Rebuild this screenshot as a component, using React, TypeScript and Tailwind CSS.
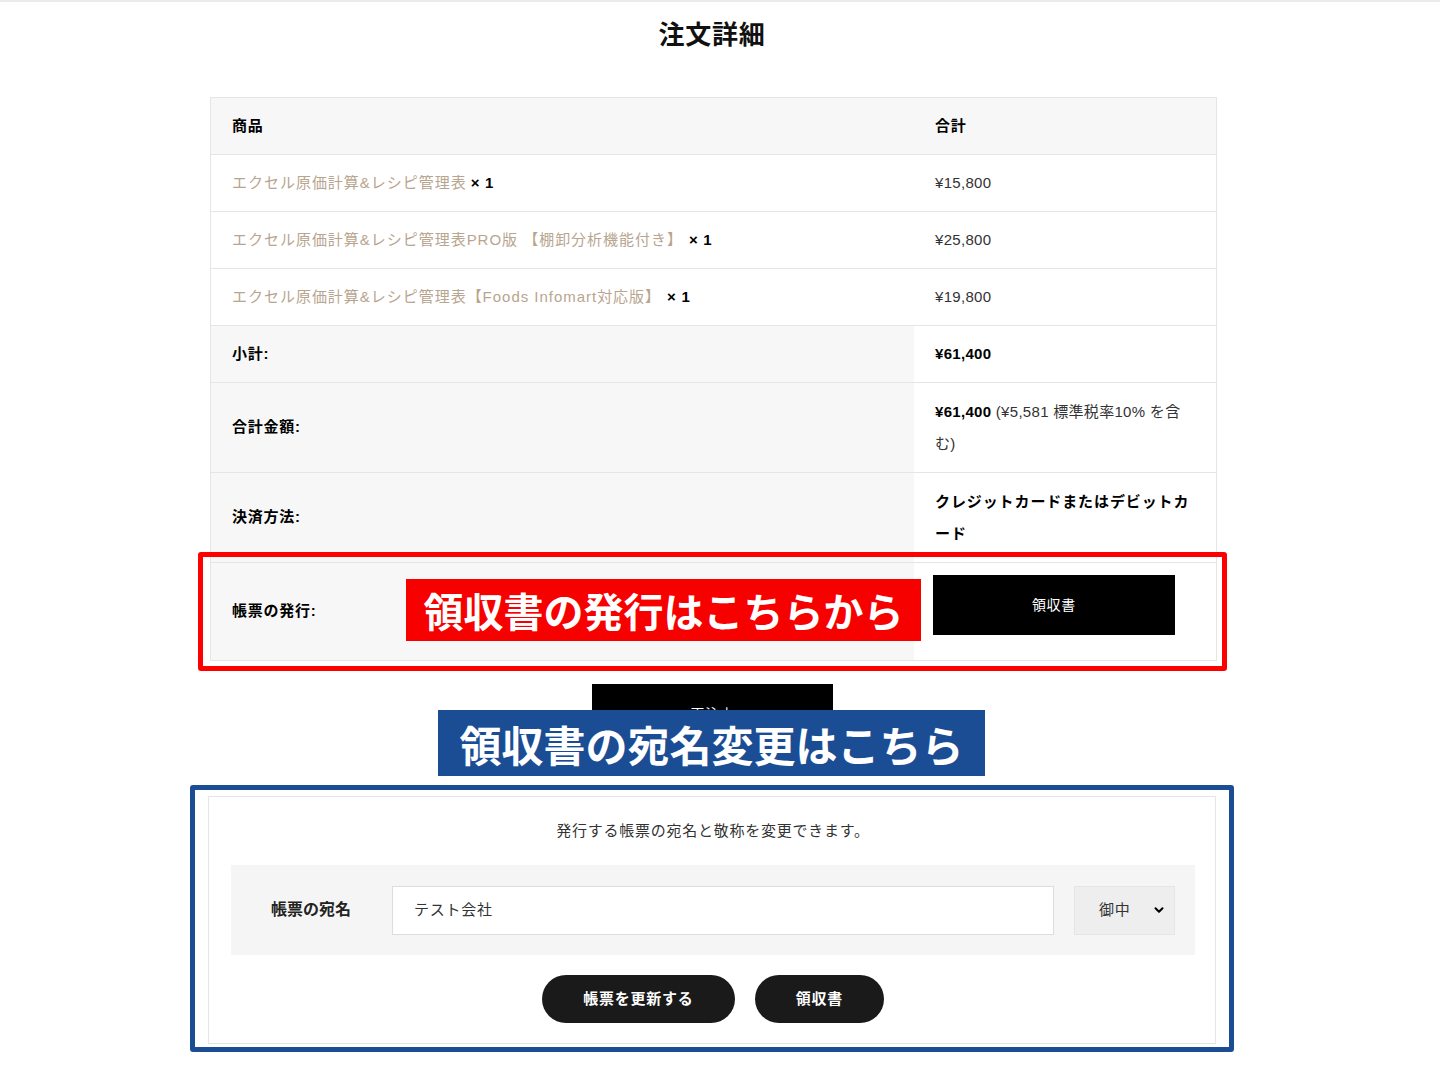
import { ChevronDown } from "lucide-react";

const font = { fontFamily: '"Liberation Sans", "Noto Sans CJK JP", sans-serif' };

const items = [
  { name: "エクセル原価計算&レシピ管理表", price: "¥15,800", gap: "" },
  { name: "エクセル原価計算&レシピ管理表PRO版 【棚卸分析機能付き】", price: "¥25,800", gap: "ml-[6px]" },
  { name: "エクセル原価計算&レシピ管理表【Foods Infomart対応版】", price: "¥19,800", gap: "ml-[6px]" },
];

function TotalRow({ label, children, h }) {
  return (
    <div className={`flex border-b border-[#e5e5e5] ${h}`}>
      <div className="w-[703px] bg-[#f7f7f7] pl-[21px] flex items-center font-bold text-black">{label}</div>
      <div className="flex-1 pl-[21px] pr-[10px] flex items-center">{children}</div>
    </div>
  );
}

export default function App() {
  return (
    <div style={font} className="min-h-[1080px] bg-white border-t-2 border-[#ebebeb] text-[15px] tracking-[0.05em] text-[#333]">
      <h1 className="pt-[15px] text-center text-[26px] leading-[36px] font-bold text-[#111] pr-[16px]">注文詳細</h1>

      {/* order table */}
      <div className="ml-[210px] w-[1007px] mt-[44px] border border-[#e5e5e5] border-b-0">
        <div className="flex h-[57px] bg-[#f7f7f7] border-b border-[#e5e5e5] font-bold text-black">
          <div className="w-[703px] pl-[21px] flex items-center">商品</div>
          <div className="flex-1 pl-[21px] flex items-center">合計</div>
        </div>
        {items.map((it, i) => (
          <div key={i} className="flex h-[57px] border-b border-[#e5e5e5]">
            <div className="w-[703px] pl-[21px] flex items-center">
              <span className="text-[#b8a58f] tracking-[0.065em]">{it.name}</span>
              <span className={`font-bold text-black ml-[4px] ${it.gap}`}>× 1</span>
            </div>
            <div className="flex-1 pl-[21px] flex items-center tracking-[0.02em]">{it.price}</div>
          </div>
        ))}
        <TotalRow label="小計:" h="h-[57px]">
          <span className="font-bold text-black tracking-[0.02em]">¥61,400</span>
        </TotalRow>
        <TotalRow label="合計金額:" h="h-[90px]">
          <div className="leading-[32px] whitespace-nowrap tracking-[0.02em]">
            <span className="font-bold text-black">¥61,400</span> (¥5,581 標準税率10% を含<br />む)
          </div>
        </TotalRow>
        <TotalRow label="決済方法:" h="h-[90px]">
          <div className="leading-[32px] font-bold text-black tracking-[0.06em] whitespace-nowrap">
            クレジットカードまたはデビットカ<br />ード
          </div>
        </TotalRow>
        <div className="relative flex h-[98px] border-b border-[#e5e5e5]">
          <div className="w-[703px] bg-[#f7f7f7] pl-[21px] flex items-center font-bold text-black">帳票の発行:</div>
          <div className="flex-1 pl-[19px] pt-[12px]">
            <button className="w-[242px] h-[60px] bg-black text-white text-[14px]">領収書</button>
          </div>
          {/* annotation */}
          <div className="absolute left-[-13px] right-[-11px] top-[-11px] bottom-[-11px] border-[5px] border-[#ff0000] rounded-[3px]" />
          <div className="absolute left-[195px] top-[16px] w-[515px] h-[62px] bg-[#f70000] flex items-center justify-center text-white font-bold text-[40px] tracking-normal" style={{ fontFamily: '"Noto Sans CJK JP", sans-serif' }}>
            領収書の発行はこちらから
          </div>
        </div>
      </div>

      {/* reorder button + annotation */}
      <div className="relative mt-[23px] h-[101px]">
        <div className="flex justify-center pr-[15px]">
          <button className="w-[241px] h-[60px] bg-black text-white text-[14px]">再注文</button>
        </div>
        <div className="absolute left-[438px] top-[26px] w-[547px] h-[66px] bg-[#1b4d94] flex items-center justify-center text-white font-bold text-[42px] tracking-normal" style={{ fontFamily: '"Noto Sans CJK JP", sans-serif' }}>
          領収書の宛名変更はこちら
        </div>
      </div>

      {/* receipt name form */}
      <div className="ml-[190px] w-[1044px] border-[5px] border-[#1b4d94] rounded-[3px] pt-[6px] pb-[3px] px-[13px]">
        <div className="border border-[#e5e5e5] pt-[24px] pb-[20px] pl-[22px] pr-[20px]">
          <p className="text-center leading-[20px] text-[#333]">発行する帳票の宛名と敬称を変更できます。</p>
          <div className="mt-[24px] h-[90px] bg-[#f5f5f5] flex items-center pl-[40px] pr-[20px]">
            <div className="w-[121px] font-bold text-[16px] text-[#222] tracking-normal">帳票の宛名</div>
            <div className="w-[662px] h-[49px] bg-white border border-[#dddddd] flex items-center pl-[21px] text-[#333]">テスト会社</div>
            <div className="ml-[20px] w-[101px] h-[49px] bg-[#eeeeee] border border-[#e5e5e5] flex items-center pl-[24px] pr-[8px] text-[#333]">
              <span className="flex-1">御中</span>
              <ChevronDown size={14} strokeWidth={3.5} className="text-black" />
            </div>
          </div>
          <div className="mt-[20px] flex justify-center gap-[20px]">
            <button className="w-[193px] h-[48px] rounded-full bg-[#1a1a1a] text-white font-bold">帳票を更新する</button>
            <button className="w-[129px] h-[48px] rounded-full bg-[#1a1a1a] text-white font-bold">領収書</button>
          </div>
        </div>
      </div>
    </div>
  );
}
